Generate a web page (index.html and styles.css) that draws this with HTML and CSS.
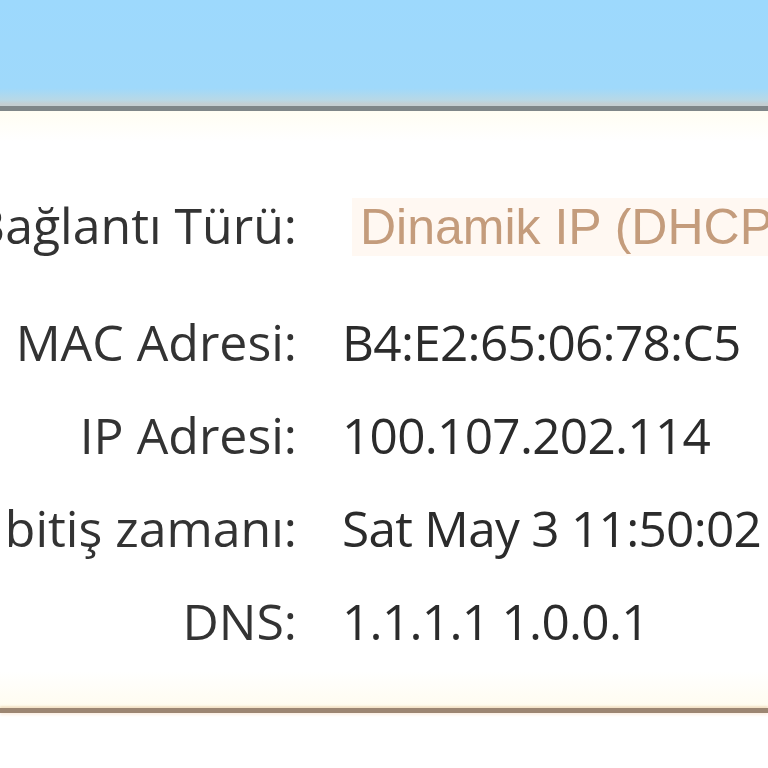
FILE: index.html
```html
<!DOCTYPE html>
<html lang="tr">
<head>
    <meta charset="UTF-8">
    <meta name="viewport" content="width=device-width, initial-scale=1.0">
    <title>WAN Durumu</title>
    <link rel="stylesheet" href="styles.css">
</head>
<body>
    <div class="topbar"></div>

    <div class="panel">
        <div class="info-row first">
            <div class="info-label"><span>Bağlantı Türü:</span></div>
            <div class="info-value"><span class="conn-type">Dinamik IP (DHCP)</span></div>
        </div>
        <div class="info-row">
            <div class="info-label"><span>MAC Adresi:</span></div>
            <div class="info-value">B4:E2:65:06:78:C5</div>
        </div>
        <div class="info-row">
            <div class="info-label"><span>IP Adresi:</span></div>
            <div class="info-value">100.107.202.114</div>
        </div>
        <div class="info-row">
            <div class="info-label"><span>Kira bitiş zamanı:</span></div>
            <div class="info-value">Sat May 3 11:50:02</div>
        </div>
        <div class="info-row">
            <div class="info-label"><span>DNS:</span></div>
            <div class="info-value">1.1.1.1 1.0.0.1</div>
        </div>
    </div>

    <div class="bottom-line"></div>
</body>
</html>
```

FILE: styles.css
```css
* {
    margin: 0;
    padding: 0;
    box-sizing: border-box;
}

body {
    background-color: #ffffff;
    font-family: 'Open Sans', 'Noto Sans', sans-serif;
    overflow: hidden;
    width: 768px;
    height: 768px;
}

.topbar {
    height: 111px;
    background: linear-gradient(to bottom, #9dd9fd 0px, #9fd9fb 88px, #b8d8e6 100px, #c4ced2 104px);
    border-bottom: 5px solid #7f8689;
}

.panel {
    padding: 67px 0 41px 0;
    background: linear-gradient(to bottom, #fffdf3 0px, #ffffff 30px, #ffffff 560px, #fffcef 597px);
}

.info-row {
    display: flex;
    align-items: center;
    height: 93px;
    white-space: nowrap;
}

.info-row.first {
    margin-bottom: 24px;
}

.info-label {
    flex: 0 0 297px;
    min-width: 0;
    display: flex;
    justify-content: flex-end;
    color: #333333;
    font-size: 50px;
}

.info-value {
    margin-left: 45px;
    color: #2b2b2b;
    font-size: 49.5px;
    letter-spacing: -0.7px;
}

.conn-type {
    display: inline-block;
    padding: 0 0 0 8px;
    margin-left: 10px;
    font-family: 'Liberation Sans', Arial, sans-serif;
    font-size: 50px;
    letter-spacing: 0;
    color: #c49c7c;
    background-color: #fff8f2;
}

.bottom-line {
    height: 5px;
    background-color: #9c8672;
    box-shadow: 0 -2px 2px #f3e2c6, 0 2px 3px #fbeee2;
}
```
